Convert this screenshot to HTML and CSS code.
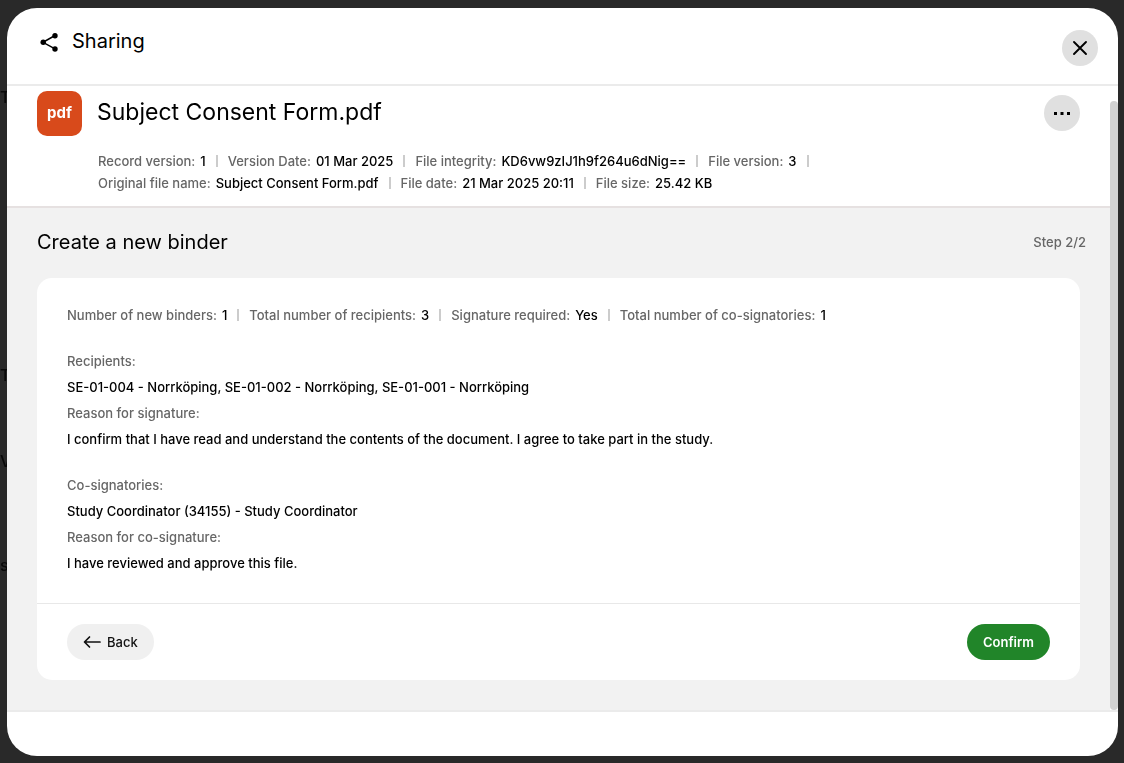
FILE: index.html
```html
<!DOCTYPE html>
<html lang="en">
<head>
<meta charset="utf-8">
<meta name="viewport" content="width=device-width, initial-scale=1">
<title>Sharing</title>
<link rel="stylesheet" href="styles.css">
</head>
<body>
<div class="backdrop" aria-hidden="true">
  <span class="ghost ghost-head">Tr</span>
  <span class="ghost ghost-row">Tr</span>
  <span class="ghost ghost-mark">V</span>
  <span class="ghost ghost-foot">s</span>
</div>
<div class="dialog" role="dialog" aria-labelledby="dialog-title">
  <header class="dialog-header">
    <svg class="share-icon" viewBox="0 0 20 20" aria-hidden="true">
      <path d="M16 3.500 4 10.300l12 6.500" fill="none" stroke="#000" stroke-width="1.500"/>
      <circle cx="16" cy="3.700" r="2.700"/><circle cx="4.200" cy="10.300" r="2.700"/><circle cx="16" cy="17" r="2.700"/>
    </svg>
    <h1 class="dialog-title" id="dialog-title">Sharing</h1>
    <button class="round-button" type="button" aria-label="Close">
      <svg class="round-icon" viewBox="0 0 18 18" aria-hidden="true"><path d="M3 3l12 12M15 3 3 15" fill="none" stroke="#000" stroke-width="1.900" stroke-linecap="round"/></svg>
    </button>
  </header>
  <div class="dialog-body">
    <main class="content">
      <section class="file">
        <div class="file-type">pdf</div>
        <h2 class="file-name">Subject Consent Form.pdf</h2>
        <button class="round-button file-menu" type="button" aria-label="More options">
          <svg class="round-icon" viewBox="0 0 18 18" aria-hidden="true"><path d="M1 8h3v3H1zM7.500 8h3v3h-3zM14 8h3v3h-3z"/></svg>
        </button>
        <dl class="facts file-facts">
          <div class="fact"><dt>Record version:</dt><dd>1</dd></div>
          <div class="fact"><dt>Version Date:</dt><dd>01 Mar 2025</dd></div>
          <div class="fact"><dt>File integrity:</dt><dd>KD6vw9zIJ1h9f264u6dNig==</dd></div>
          <div class="fact"><dt>File version:</dt><dd>3</dd></div>
          <div class="fact"><dt>Original file name:</dt><dd>Subject Consent Form.pdf</dd></div>
          <div class="fact"><dt>File date:</dt><dd>21 Mar 2025 20:11</dd></div>
          <div class="fact"><dt>File size:</dt><dd>25.42 KB</dd></div>
        </dl>
      </section>
      <section class="binder">
        <div class="binder-head">
          <h2 class="binder-title">Create a new binder</h2>
          <span class="step">Step 2/2</span>
        </div>
        <div class="card">
          <div class="card-body">
            <dl class="facts">
              <div class="fact"><dt>Number of new binders:</dt><dd>1</dd></div>
              <div class="fact"><dt>Total number of recipients:</dt><dd>3</dd></div>
              <div class="fact"><dt>Signature required:</dt><dd>Yes</dd></div>
              <div class="fact"><dt>Total number of co-signatories:</dt><dd>1</dd></div>
            </dl>
            <dl class="details">
              <dt>Recipients:</dt>
              <dd>SE-01-004 - Norrköping, SE-01-002 - Norrköping, SE-01-001 - Norrköping</dd>
              <dt>Reason for signature:</dt>
              <dd>I confirm that I have read and understand the contents of the document. I agree to take part in the study.</dd>
            </dl>
            <dl class="details">
              <dt>Co-signatories:</dt>
              <dd>Study Coordinator (34155) - Study Coordinator</dd>
              <dt>Reason for co-signature:</dt>
              <dd>I have reviewed and approve this file.</dd>
            </dl>
          </div>
          <div class="card-actions">
            <button class="button" type="button">
              <svg class="back-icon" viewBox="0 0 18 14" aria-hidden="true"><path d="M17 7H2M6.500 2 1.500 7l5 5" fill="none" stroke="#111" stroke-width="1.700" stroke-linecap="round" stroke-linejoin="round"/></svg>
              Back
            </button>
            <button class="button button-primary" type="button">Confirm</button>
          </div>
        </div>
      </section>
    </main>
    <div class="scroll-track" aria-hidden="true"><div class="scroll-thumb"></div></div>
  </div>
  <footer class="dialog-footer"></footer>
</div>
</body>
</html>
```

FILE: styles.css
```css
* { box-sizing: border-box; }

body {
  margin: 0;
  min-height: 100vh;
  display: flex;
  padding: 8px 6px 7px 7px;
  background: #292929;
  color: #000;
  font: 500 13px/22px Inter, "Liberation Sans", sans-serif;
}

h1, h2, dl, dd { margin: 0; font-weight: 400; }
dt, dd { font-weight: 500; }

.backdrop {
  position: fixed;
  inset: 0;
  overflow: hidden;
  color: #090909;
}
.ghost { position: absolute; left: 0; font-size: 16px; }
.ghost-head { top: 86px; }
.ghost-row { top: 364px; }
.ghost-mark { top: 450px; }
.ghost-foot { top: 554px; }

.dialog {
  position: relative;
  flex: 1;
  min-width: 0;
  display: flex;
  flex-direction: column;
  overflow: hidden;
  border-radius: 30px;
  background: #fff;
}

.dialog-header {
  display: flex;
  align-items: flex-start;
  padding: 22px 20px 18px 32px;
  border-bottom: 2px solid #ebebeb;
}
.share-icon { width: 20px; height: 20px; margin-top: 2px; }
.dialog-title { flex: 1; margin-left: 13px; font-size: 20px; }

.round-button {
  display: grid;
  place-items: center;
  width: 36px;
  height: 36px;
  padding: 0;
  border: 0;
  border-radius: 50%;
  background: #e0e0e0;
}
.round-icon { width: 18px; height: 18px; }

.dialog-body { flex: 1; display: flex; }
.content { flex: 1; min-width: 0; display: flex; flex-direction: column; }
.scroll-track { width: 8px; padding-top: 15px; display: flex; }
.scroll-thumb { flex: 1; border-radius: 4px; background: #d1d1d1; }

.file {
  display: grid;
  grid-template-columns: 45px 1fr auto;
  column-gap: 15px;
  align-items: start;
  padding: 5px 30px 12px;
  border-bottom: 2px solid #e6e1e1;
}
.file-type {
  height: 45px;
  border-radius: 10px;
  background: #d84a1b;
  color: #fff;
  font-size: 15px;
  font-weight: 700;
  line-height: 43px;
  text-align: center;
}
.file-name { font-size: 23px; line-height: 42px; }
.file-menu { margin-top: 4px; }
.file-facts { grid-column: 2 / 4; margin: 14px 0 0 1px; }

.facts { display: flex; flex-wrap: wrap; }
.fact { display: flex; align-items: center; }
.fact dt { color: #666; }
.fact dd { margin-left: 5px; }
.fact::after {
  content: "";
  width: 2px;
  height: 12px;
  margin: 0 10px;
  background: #ccc;
}
.fact:last-child::after { display: none; }

.binder { flex: 1; padding: 20px 30px 30px; background: #f2f2f2; }
.binder-head {
  display: flex;
  align-items: center;
  justify-content: space-between;
  margin: 0 -6px 22px 0;
}
.binder-title { font-size: 20px; line-height: 28px; }
.step { color: #666; }

.card { border-radius: 15px; background: #fff; }
.card-body {
  display: grid;
  gap: 20px;
  padding: 24px 30px 27px;
  line-height: 26px;
}
.details dt { color: #666; }
.card-actions {
  display: flex;
  justify-content: space-between;
  padding: 20px 30px;
  border-top: 1px solid #e8e8e8;
}
.button {
  display: flex;
  align-items: center;
  gap: 6px;
  height: 36px;
  padding: 0 16px;
  border: 0;
  border-radius: 18px;
  background: #f0f0f0;
  color: #111;
  font: inherit;
}
.back-icon { width: 18px; height: 14px; }
.button-primary { background: #218529; color: #fff; font-weight: 600; }

.dialog-footer { height: 46px; border-top: 2px solid #ebebeb; }
```
